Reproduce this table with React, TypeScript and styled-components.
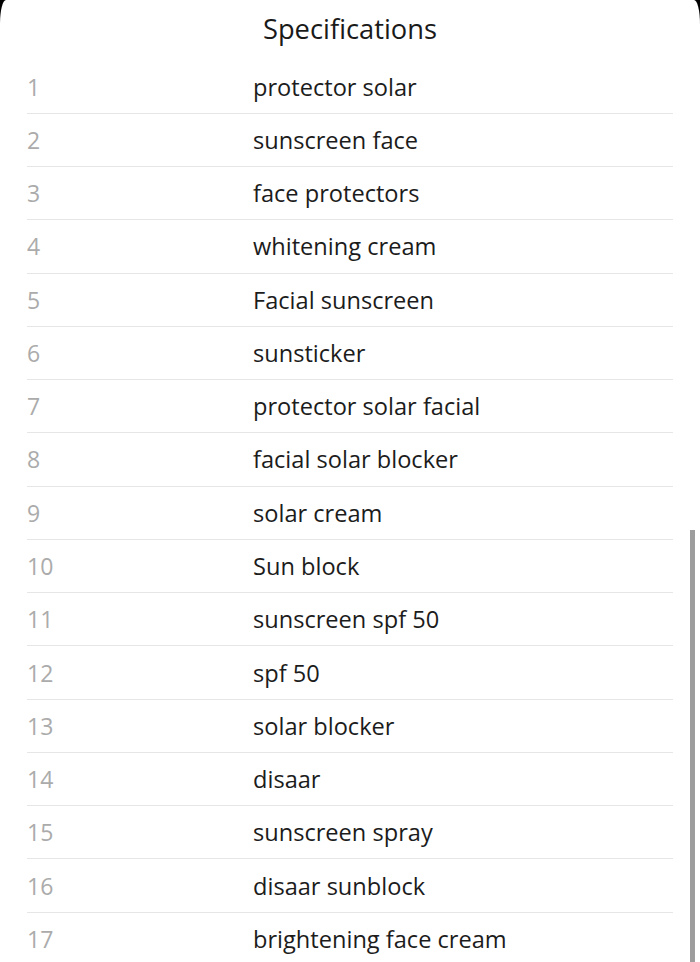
import React from "react";
import styled, { createGlobalStyle } from "styled-components";

const Global = createGlobalStyle`
  html, body { margin: 0; padding: 0; background: #000; height: 100%; overflow: hidden; }
  #root { height: 100%; }
  * { box-sizing: border-box; }
`;

const Sheet = styled.div`
  position: relative;
  height: 962px;
  background: #fff;
  border-radius: 6px 6px 0 0 / 24px 24px 0 0;
  overflow: hidden;
  font-family: "Open Sans", "Noto Sans", sans-serif;
  display: flex;
  flex-direction: column;
`;

const Header = styled.div`
  flex-shrink: 0;
  height: 60.5px;
  display: flex;
  align-items: center;
  justify-content: center;
  font-size: 27.3px;
  color: #1a1a1a;
  padding-bottom: 3.5px;
`;

const List = styled.div`
  flex-shrink: 0;
  padding: 0 27px;
  display: flex;
  flex-direction: column;
`;

const Row = styled.div`
  flex-shrink: 0;
  display: grid;
  grid-template-columns: 226px 1fr;
  align-items: center;
  height: 53.27px;
  border-bottom: 1px solid #e6e6e6;
`;

const Num = styled.span`
  font-size: 23px;
  color: #ababab;
  font-weight: 400;
`;

const Label = styled.span`
  font-size: 23.6px;
  color: #1c1c1c;
  white-space: nowrap;
`;

const Scrollbar = styled.div`
  position: absolute;
  right: 5px;
  top: 530px;
  bottom: 0;
  width: 5px;
  background: #9d9d9d;
`;

const items = [
  "protector solar",
  "sunscreen face",
  "face protectors",
  "whitening cream",
  "Facial sunscreen",
  "sunsticker",
  "protector solar facial",
  "facial solar blocker",
  "solar cream",
  "Sun block",
  "sunscreen spf 50",
  "spf 50",
  "solar blocker",
  "disaar",
  "sunscreen spray",
  "disaar sunblock",
  "brightening face cream",
];

export default function App() {
  return (
    <>
      <Global />
      <Sheet>
        <Header>Specifications</Header>
        <List>
          {items.map((t, i) => (
            <Row key={i}>
              <Num>{i + 1}</Num>
              <Label>{t}</Label>
            </Row>
          ))}
        </List>
        <Scrollbar />
      </Sheet>
    </>
  );
}
